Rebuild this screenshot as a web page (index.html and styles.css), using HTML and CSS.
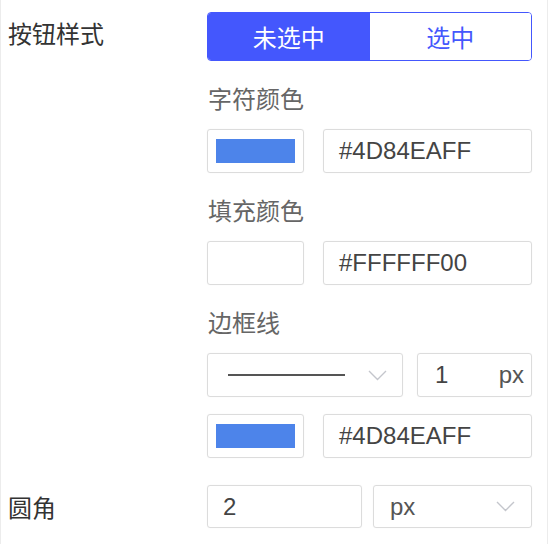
FILE: index.html
```html
<!DOCTYPE html>
<html lang="zh">
<head>
<meta charset="utf-8">
<link rel="stylesheet" href="styles.css">
</head>
<body>
<div class="panel">
  <div class="form-item">
    <div class="item-label top">按钮样式</div>
    <div class="item-content">
      <div class="segmented">
        <button class="seg-btn active">未选中</button>
        <button class="seg-btn">选中</button>
      </div>

      <div class="sub-label">字符颜色</div>
      <div class="row">
        <div class="swatch"><span class="chip chip-blue"></span></div>
        <div class="field wide">#4D84EAFF</div>
      </div>

      <div class="sub-label">填充颜色</div>
      <div class="row">
        <div class="swatch"><span class="chip"></span></div>
        <div class="field wide">#FFFFFF00</div>
      </div>

      <div class="sub-label">边框线</div>
      <div class="row">
        <div class="field select line-select">
          <span class="line-sample"></span>
          <svg class="chevron" width="19" height="11" viewBox="0 0 19 11"><polyline points="1,1 9.5,9.5 18,1" fill="none" stroke="#c4c6cc" stroke-width="1.4"/></svg>
        </div>
        <div class="field num">
          <span>1</span>
          <span class="unit">px</span>
        </div>
      </div>
      <div class="row row-tight">
        <div class="swatch"><span class="chip chip-blue"></span></div>
        <div class="field wide">#4D84EAFF</div>
      </div>
    </div>
  </div>

  <div class="form-item radius-item">
    <div class="item-label mid">圆角</div>
    <div class="item-content">
      <div class="row">
        <div class="field radius-input">2</div>
        <div class="field select unit-select">
          <span class="unit">px</span>
          <svg class="chevron" width="19" height="11" viewBox="0 0 19 11"><polyline points="1,1 9.5,9.5 18,1" fill="none" stroke="#c4c6cc" stroke-width="1.4"/></svg>
        </div>
      </div>
    </div>
  </div>
</div>
</body>
</html>
```

FILE: styles.css
```css
* { box-sizing: border-box; }

html, body {
  margin: 0;
  padding: 0;
  background: #ffffff;
}

body {
  font-family: "Liberation Sans", "Noto Sans CJK SC", sans-serif;
  font-size: 24px;
  color: #333333;
}

.panel {
  width: 548px;
  height: 544px;
  border-left: 1px solid #ececec;
  border-right: 1px solid #ececec;
  padding-top: 12px;
}

.form-item {
  display: grid;
  grid-template-columns: 206px 325px;
}

.item-label {
  padding-left: 7px;
  color: #333333;
  font-family: "Noto Sans CJK SC", sans-serif;
}

.item-label.top {
  line-height: 41px;
}

.item-label.mid {
  line-height: 43px;
}

.item-content {
  display: flex;
  flex-direction: column;
}

.segmented {
  display: flex;
  height: 49px;
  border: 1px solid #4457fd;
  border-radius: 4px;
  overflow: hidden;
}

.seg-btn {
  flex: 1;
  margin: 0;
  border: 0;
  background: #ffffff;
  color: #4457fd;
  font-family: "Noto Sans CJK SC", sans-serif;
  font-size: 24px;
  padding: 0;
}

.seg-btn.active {
  background: #4457fd;
  color: #ffffff;
}

.sub-label {
  font-family: "Noto Sans CJK SC", sans-serif;
  color: #666666;
  line-height: 32px;
  height: 32px;
  margin-top: 21px;
  margin-bottom: 15px;
  padding-left: 1px;
}

.row {
  display: flex;
  gap: 19px;
  height: 44px;
}

.row-tight {
  margin-top: 17px;
}

.swatch {
  width: 97px;
  height: 44px;
  border: 1px solid #dcdcdc;
  border-radius: 3px;
  padding: 9px 8px;
  box-shadow: 0 0 1px rgba(0,0,0,0.08);
}

.chip {
  display: block;
  width: 100%;
  height: 100%;
}

.chip-blue {
  background: #4d84ea;
}

.field {
  height: 44px;
  border: 1px solid #dcdcdc;
  border-radius: 3px;
  box-shadow: 0 0 1px rgba(0,0,0,0.08);
  display: flex;
  align-items: center;
  padding: 0 15px;
  color: #444444;
  line-height: 1;
}

.wide {
  flex: 1;
}

.select {
  justify-content: space-between;
}

.line-select {
  width: 196px;
  padding: 0 15px 0 20px;
}

.line-sample {
  display: block;
  width: 117px;
  height: 2px;
  background: #555555;
}

.chevron {
  display: block;
}

.row .num {
  flex: 1;
  margin-left: -5px;
  justify-content: space-between;
  padding: 0 7px 0 17px;
}

.unit {
  color: #555555;
}

.radius-item {
  margin-top: 27px;
}

.radius-item .row {
  gap: 11px;
  height: 43px;
}

.radius-input {
  width: 155px;
  height: 43px;
}

.unit-select {
  flex: 1;
  height: 43px;
  padding: 0 16px 0 16px;
}
```
